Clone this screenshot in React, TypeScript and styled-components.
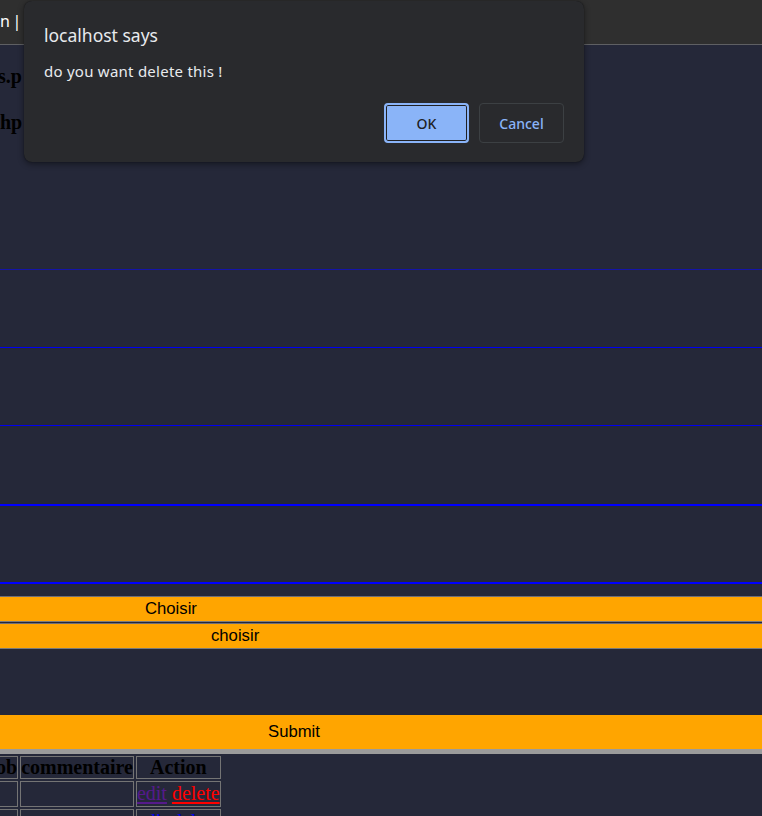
import React from "react";
import styled, { createGlobalStyle } from "styled-components";

const Global = createGlobalStyle`
  html, body { margin: 0; padding: 0; background: #252839; }
  body { width: 762px; height: 816px; overflow: hidden; }
`;

const Screen = styled.div`
  position: relative;
  width: 762px;
  height: 816px;
  overflow: hidden;
  background: #252839;
  display: flex;
  flex-direction: column;
`;

const TitleBar = styled.div`
  flex: none;
  height: 35px;
  padding-top: 9px;
  background: #2f2f2f;
  border-bottom: 1px solid #5f6063;
  color: #ffffff;
  font-family: "Noto Sans", "Open Sans", sans-serif;
  font-size: 16px;
  line-height: 24px;
  word-spacing: -1.5px;
  white-space: nowrap;
  overflow: hidden;
`;

const Intro = styled.div`
  flex: none;
  height: 204px;
  padding-top: 20px;
  border-bottom: 1px solid #1414a8;
  font: bold 20px/23px "Liberation Serif", "Times New Roman", serif;
  color: #000;
  overflow: hidden;
`;

const Crumb = styled.p<{ $shift: number }>`
  margin: 0 0 23px ${(p) => p.$shift}px;
  white-space: nowrap;
`;

const Field = styled.div<{ $h: number; $w: number; $line: string }>`
  flex: none;
  height: ${(p) => p.$h}px;
  border-bottom: ${(p) => p.$w}px solid ${(p) => p.$line};
`;

const Selects = styled.div`
  flex: none;
  margin-top: 12px;
  display: flex;
  flex-direction: column;
  gap: 1px;
`;

const Chooser = styled.div<{ $indent: number }>`
  height: 24px;
  background: #ffa500;
  border-top: 1px solid #6e6e78;
  border-bottom: 1px solid #7a7a7a;
  padding-left: ${(p) => p.$indent}px;
  font: 16.7px/24px "Liberation Sans", Arial, sans-serif;
  color: #000;
  white-space: nowrap;
`;

const SubmitBar = styled.div<{ $indent: number }>`
  flex: none;
  margin-top: 66px;
  height: 34px;
  background: #ffa500;
  border-bottom: 5px solid #9b9b9b;
  padding-left: ${(p) => p.$indent}px;
  font: 16.7px/34px "Liberation Sans", Arial, sans-serif;
  color: #000;
`;

const Table = styled.table`
  flex: none;
  align-self: flex-start;
  margin-left: -17px;
  border-collapse: separate;
  border-spacing: 2px;
  font: 20px "Liberation Serif", "Times New Roman", serif;
  color: #000;
`;

const Head = styled.th`
  height: 21px;
  padding: 0;
  border: 1px solid #747474;
  font-weight: bold;
  line-height: 21px;
  text-align: center;
  white-space: nowrap;
`;

const Cell = styled.td`
  height: 24px;
  padding: 0;
  border: 1px solid #747474;
  line-height: 22px;
  vertical-align: top;
  white-space: nowrap;
`;

const Link = styled.a<{ $color: string }>`
  color: ${(p) => p.$color};
  text-decoration: underline;
  text-decoration-thickness: 2px;
  text-underline-offset: 2px;
  cursor: pointer;
`;

const Dialog = styled.div`
  position: absolute;
  left: 24px;
  top: 1px;
  width: 560px;
  box-sizing: border-box;
  padding: 22px 20px 19px 20px;
  background: #292a2d;
  border-radius: 8px;
  box-shadow: 0 2px 6px rgba(0, 0, 0, 0.45), 0 0 1px rgba(0, 0, 0, 0.6);
  font-family: "Noto Sans", "Open Sans", sans-serif;
  color: #e8eaed;
  display: flex;
  flex-direction: column;
`;

const DialogTitle = styled.div`
  font-size: 17.5px;
  line-height: 24px;
`;

const DialogText = styled.div`
  margin-top: 14px;
  font-size: 15px;
  line-height: 20px;
  letter-spacing: 0.25px;
`;

const Actions = styled.div`
  margin-top: 22px;
  display: flex;
  justify-content: flex-end;
  gap: 10px;
`;

const Btn = styled.button<{ $primary?: boolean }>`
  box-sizing: border-box;
  width: 85px;
  height: 40px;
  border-radius: 4px;
  font-family: "Noto Sans", "Open Sans", sans-serif;
  font-size: 14px;
  font-weight: 500;
  padding: 0;
  cursor: pointer;
  ${(p) =>
    p.$primary
      ? `
    background: #8ab4f8;
    color: #202124;
    border: 2px solid #8ab4f8;
    box-shadow: inset 0 0 0 1px #202124;
  `
      : `
    background: transparent;
    color: #8ab4f8;
    border: 1px solid #3c4043;
  `}
`;

export default function App() {
  return (
    <>
      <Global />
      <Screen>
        <TitleBar>n | C</TitleBar>
        <Intro>
          <Crumb $shift={-2}>s.p</Crumb>
          <Crumb $shift={0}>hp</Crumb>
        </Intro>
        <Field $h={77} $w={1} $line="#0000f0" />
        <Field $h={77} $w={1} $line="#0000f0" />
        <Field $h={78} $w={2} $line="#0000ff" />
        <Field $h={76} $w={2} $line="#0000ff" />
        <Selects>
          <Chooser $indent={145}>Choisir</Chooser>
          <Chooser $indent={211}>choisir</Chooser>
        </Selects>
        <SubmitBar $indent={268}>Submit</SubmitBar>
        <Table>
          <thead>
            <tr>
              <Head>Job</Head>
              <Head>commentaire</Head>
              <Head>Action</Head>
            </tr>
          </thead>
          <tbody>
            <tr>
              <Cell />
              <Cell />
              <Cell>
                <Link $color="#551a8b">edit</Link> <Link $color="#ff0000">delete</Link>
              </Cell>
            </tr>
            <tr>
              <Cell />
              <Cell />
              <Cell>
                <Link $color="#0000ee">edit</Link> <Link $color="#0000ee">delete</Link>
              </Cell>
            </tr>
          </tbody>
        </Table>
        <Dialog>
          <DialogTitle>localhost says</DialogTitle>
          <DialogText>do you want delete this !</DialogText>
          <Actions>
            <Btn $primary>OK</Btn>
            <Btn>Cancel</Btn>
          </Actions>
        </Dialog>
      </Screen>
    </>
  );
}
